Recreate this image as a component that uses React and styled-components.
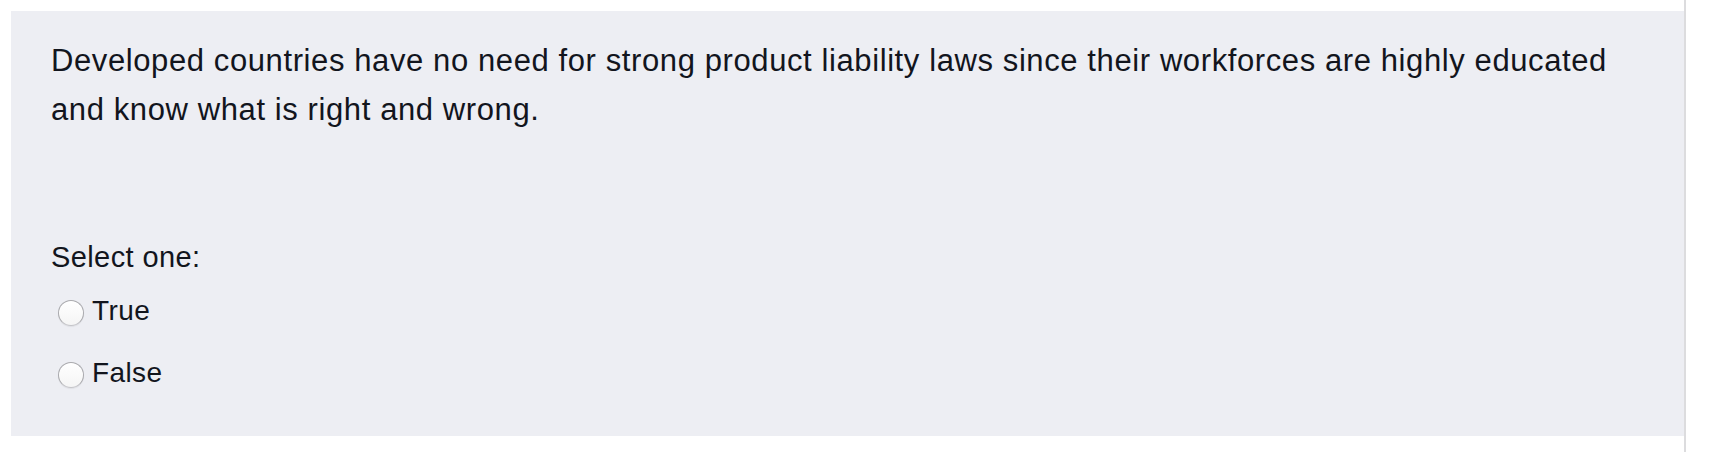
import styled, { createGlobalStyle } from "styled-components";

const GlobalStyle = createGlobalStyle`
  html, body {
    margin: 0;
    padding: 0;
    background: #ffffff;
  }
  body {
    font-family: "Liberation Sans", Arial, Helvetica, sans-serif;
    color: #12151d;
  }
`;

const Page = styled.div`
  height: 452px;
  display: flex;
  align-items: flex-start;
`;

const Formulation = styled.div`
  width: 1673px;
  height: 425px;
  margin: 11px 0 0 11px;
  box-sizing: border-box;
  padding: 25px 40px 0 40px;
  background: #edeef3;
`;

const Divider = styled.div`
  width: 2px;
  align-self: stretch;
  background: #dcdcde;
`;

const QuestionText = styled.p`
  margin: 0;
  font-size: 31px;
  line-height: 49px;
  letter-spacing: 0.6px;
`;

const Prompt = styled.div`
  margin-top: 103px;
  font-size: 29px;
  line-height: 40px;
  letter-spacing: 0.4px;
`;

const Answers = styled.div`
  display: flex;
  flex-direction: column;
  gap: 20px;
  margin-top: 13px;
`;

const Option = styled.label`
  display: flex;
  align-items: center;
  gap: 8px;
  padding-left: 7px;
  font-size: 28px;
  line-height: 42px;
  letter-spacing: 0.4px;
`;

const Radio = styled.span`
  width: 26px;
  height: 26px;
  margin-top: 3px;
  border-radius: 50%;
  box-sizing: border-box;
  border: 1px solid #a9a9ad;
  border-bottom-color: #c4c4c8;
  background: linear-gradient(#ffffff, #f5f5f5);
  box-shadow: 0 1px 1px rgba(0, 0, 0, 0.06);
  flex-shrink: 0;
`;

const options = ["True", "False"];

const App = () => {
  return (
    <Page>
      <GlobalStyle />
      <Formulation>
        <QuestionText>
          Developed countries have no need for strong product liability laws
          since their workforces are highly educated and know what is right and
          wrong.
        </QuestionText>
        <Prompt>Select one:</Prompt>
        <Answers>
          {options.map((o) => (
            <Option key={o}>
              <Radio />
              {o}
            </Option>
          ))}
        </Answers>
      </Formulation>
      <Divider />
    </Page>
  );
};

export default App;
